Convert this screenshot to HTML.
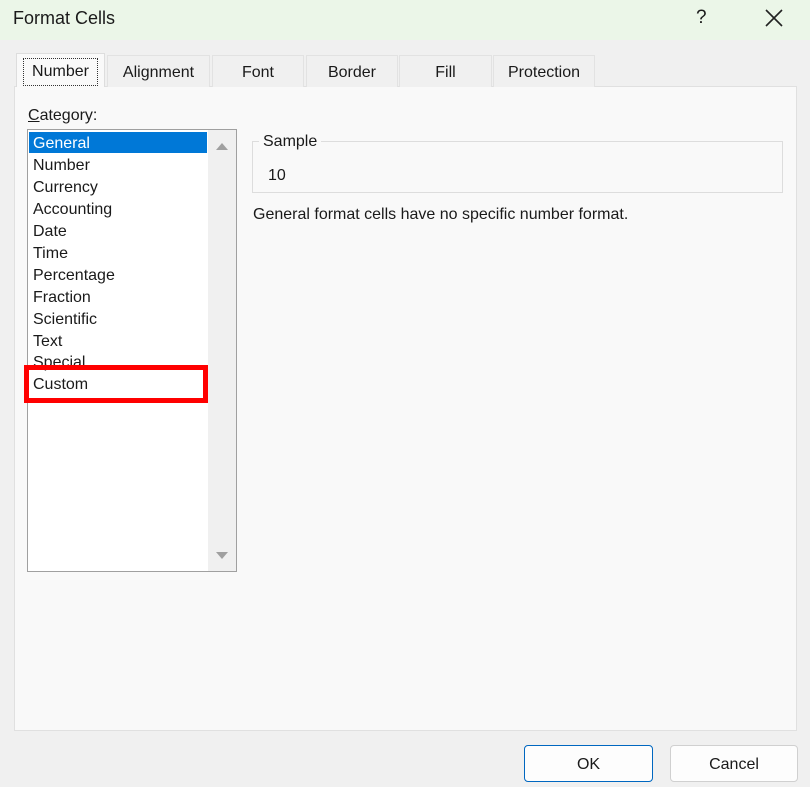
<!DOCTYPE html>
<html><head><style>
*{margin:0;padding:0;box-sizing:border-box}
body{width:810px;height:787px;background:#f0f0f0;font-family:"Liberation Sans",sans-serif;color:#1a1a1a;position:relative;overflow:hidden}
.a{position:absolute}
.title{left:0;top:0;width:810px;height:40px;background:#ebf6e8}
.tab{position:absolute;top:55px;height:32px;background:#f0f0f0;border:1px solid #e2e2e2;border-bottom:none;font-size:16px;text-align:center;line-height:34px}
.panel{left:14px;top:86px;width:783px;height:645px;background:#f9f9f9;border:1px solid #e0e0e0}
.list{left:27px;top:129px;width:210px;height:443px;background:#fff;border:1px solid #a0a0a0}
.it{position:absolute;left:5px;font-size:16px;line-height:22px}
.btn{position:absolute;top:745px;height:37px;border:1px solid #d0d0d0;border-radius:4px;background:#fdfdfd;font-size:16px;text-align:center;line-height:37px}
</style></head><body>
<div class="a title"><div class="a" style="left:13px;top:8px;font-size:18px">Format Cells</div>
<div class="a" style="left:696px;top:7px;font-size:19px">?</div>
<svg class="a" style="left:764px;top:8px" width="20" height="20"><path d="M2 2L18 18M18 2L2 18" stroke="#222" stroke-width="1.6"/></svg></div>
<div class="a panel"></div>
<div class="tab" style="left:16px;width:89px;top:53px;height:34px;background:#f9f9f9;border:1px solid #ddd;border-bottom:none"><span style="border:1px dotted #333;padding:0 8px;line-height:26px;display:inline-block;margin-top:4px">Number</span></div>
<div class="tab" style="left:107px;width:103px">Alignment</div>
<div class="tab" style="left:212px;width:92px">Font</div>
<div class="tab" style="left:306px;width:92px">Border</div>
<div class="tab" style="left:399px;width:93px">Fill</div>
<div class="tab" style="left:493px;width:102px">Protection</div>
<div class="a" style="left:28px;top:107px;font-size:16px"><u>C</u>ategory:</div>
<div class="a list">
<div class="a" style="left:180px;top:0;width:28px;height:441px;background:#f0f0f0"></div>
<svg class="a" style="left:187px;top:11px" width="14" height="10"><path d="M1 9L7 2L13 9Z" fill="#a0a0a0"/></svg>
<svg class="a" style="left:187px;top:421px" width="14" height="10"><path d="M1 1L7 8L13 1Z" fill="#a0a0a0"/></svg>
<div class="a" style="left:1px;top:2px;width:178px;height:21px;background:#0078d7"></div>
<div class="it" style="top:3px;color:#fff">General</div>
<div class="it" style="top:25px">Number</div>
<div class="it" style="top:47px">Currency</div>
<div class="it" style="top:69px">Accounting</div>
<div class="it" style="top:91px">Date</div>
<div class="it" style="top:113px">Time</div>
<div class="it" style="top:135px">Percentage</div>
<div class="it" style="top:157px">Fraction</div>
<div class="it" style="top:179px">Scientific</div>
<div class="it" style="top:201px">Text</div>
<div class="it" style="top:222px">Special</div>
<div class="it" style="top:244px">Custom</div>
</div>
<div class="a" style="left:24px;top:365px;width:184px;height:38px;border:5px solid #f00"></div>
<div class="a" style="left:252px;top:141px;width:531px;height:52px;border:1px solid #ddd"></div>
<div class="a" style="left:259px;top:133px;background:#f9f9f9;padding:0 4px;font-size:16px">Sample</div>
<div class="a" style="left:268px;top:167px;font-size:16px">10</div>
<div class="a" style="left:253px;top:206px;font-size:16px">General format cells have no specific number format.</div>
<div class="btn" style="left:524px;width:129px;border:1px solid #0067c0">OK</div>
<div class="btn" style="left:670px;width:128px">Cancel</div>
</body></html>
